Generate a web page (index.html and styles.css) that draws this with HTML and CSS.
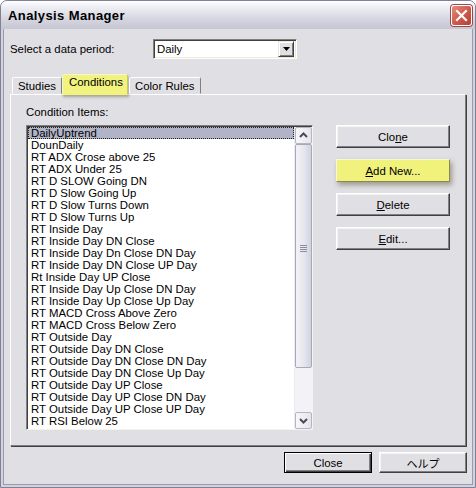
FILE: index.html
```html
<!DOCTYPE html>
<html>
<head>
<meta charset="utf-8">
<link rel="stylesheet" href="styles.css">
</head>
<body>
<div class="window">
  <div class="titlebar">
    <span class="title">Analysis Manager</span>
    <span class="close-x">
      <svg width="21" height="21" viewBox="0 0 21 21"><path d="M6 6 L15 15 M15 6 L6 15" stroke="#fff" stroke-width="2.2" stroke-linecap="square"/></svg>
    </span>
  </div>
  <div class="client">
    <div class="period-row">
      <span class="period-label">Select a data period:</span>
      <div class="combo">
        <span class="combo-text">Daily</span>
        <span class="combo-btn"><svg width="7" height="4" viewBox="0 0 7 4"><path d="M0 0 H7 L3.5 4 Z" fill="#000"/></svg></span>
      </div>
    </div>
    <div class="tabs">
      <span class="tab">Studies</span>
      <span class="tab tab-active">Conditions</span>
      <span class="tab">Color Rules</span>
    </div>
    <div class="panel">
      <div class="left">
        <div class="caption">Condition Items:</div>
        <div class="listbox">
          <ul class="items">
            <li class="selected">DailyUptrend</li>
            <li>DounDaily</li>
            <li>RT ADX Crose above 25</li>
            <li>RT ADX Under 25</li>
            <li>RT D SLOW Going DN</li>
            <li>RT D Slow Going Up</li>
            <li>RT D Slow Turns Down</li>
            <li>RT D Slow Turns Up</li>
            <li>RT Inside Day</li>
            <li>RT Inside Day DN Close</li>
            <li>RT Inside Day Dn Close DN Day</li>
            <li>RT Inside Day DN Close UP Day</li>
            <li>Rt Inside Day UP Close</li>
            <li>RT Inside Day Up Close DN Day</li>
            <li>RT Inside Day Up Close Up Day</li>
            <li>RT MACD Cross Above Zero</li>
            <li>RT MACD Cross Below Zero</li>
            <li>RT Outside Day</li>
            <li>RT Outside Day DN Close</li>
            <li>RT Outside Day DN Close DN Day</li>
            <li>RT Outside Day DN Close Up Day</li>
            <li>RT Outside Day UP Close</li>
            <li>RT Outside Day UP Close DN Day</li>
            <li>RT Outside Day UP Close UP Day</li>
            <li>RT RSI Below 25</li>
            <li>RT RSI Going DN</li>
          </ul>
          <div class="scrollbar">
            <span class="sb-btn"><svg width="15" height="15" viewBox="0 0 15 15"><path d="M4 9 L7.5 5.5 L11 9" fill="none" stroke="#4a4a58" stroke-width="2"/></svg></span>
            <span class="sb-thumb"><svg width="9" height="8" viewBox="0 0 9 8"><path d="M1 0.5 H8 M1 2.5 H8 M1 4.5 H8 M1 6.5 H8" stroke="#8c8ca0" stroke-width="1"/></svg></span>
            <span class="sb-track"></span>
            <span class="sb-btn"><svg width="15" height="15" viewBox="0 0 15 15"><path d="M4 6 L7.5 9.5 L11 6" fill="none" stroke="#4a4a58" stroke-width="2"/></svg></span>
          </div>
        </div>
      </div>
      <div class="actions">
        <span class="btn">Clo<u>n</u>e</span>
        <span class="btn btn-hl"><u>A</u>dd New...</span>
        <span class="btn"><u>D</u>elete</span>
        <span class="btn"><u>E</u>dit...</span>
      </div>
    </div>
    <div class="footer">
      <span class="btn btn-small btn-default">Close</span>
      <span class="btn btn-small jp">ヘルプ</span>
    </div>
  </div>
</div>
</body>
</html>
```
FILE: styles.css
```css
html, body {
  margin: 0;
  padding: 0;
  background: #ffffff;
}
body {
  font-family: "Liberation Sans", Arial, sans-serif;
  font-size: 11.4px;
  color: #000;
}
.window {
  width: 476px;
  height: 488px;
  box-sizing: border-box;
  border: 1px solid #808096;
  border-radius: 7px 7px 0 0;
  background: #d2d2de;
  display: flex;
  flex-direction: column;
  overflow: hidden;
}
.titlebar {
  height: 28px;
  flex: none;
  display: flex;
  align-items: center;
  justify-content: space-between;
  padding: 0 3px 0 7px;
  background: linear-gradient(#ffffff 0%, #ececf2 25%, #d8d8e2 60%, #c6c6d4 100%);
}
.title {
  font-weight: bold;
  font-size: 13px;
  letter-spacing: 0.4px;
  color: #000;
}
.close-x {
  width: 21px;
  height: 21px;
  box-sizing: border-box;
  border: 1px solid #ffffff;
  border-radius: 3px;
  background: linear-gradient(135deg, #e48c80 0%, #d25a4d 50%, #b8402f 100%);
  box-shadow: 0 0 0 1px #9a4a44;
  display: flex;
  align-items: center;
  justify-content: center;
  margin-top: 1px;
}
.close-x svg { margin: -1px; }
.client {
  flex: 1;
  margin: 0 2px 2px;
  border: 1px solid #9a9aae;
  border-top: none;
  background: #e0dfe3;
  display: flex;
  flex-direction: column;
  padding: 10px 0 0 6px;
}
.period-row {
  display: flex;
  align-items: center;
  height: 20px;
}
.period-label {
  width: 143px;
}
.combo {
  width: 144px;
  height: 20px;
  box-sizing: border-box;
  border: 1px solid;
  border-color: #808080 #ffffff #ffffff #808080;
  box-shadow: inset 1px 1px 0 #404040, inset -1px -1px 0 #ece9d8;
  background: #fff;
  display: flex;
  align-items: center;
  padding: 2px;
}
.combo-text {
  flex: 1;
  padding-left: 1px;
}
.combo-btn {
  width: 16px;
  height: 16px;
  box-sizing: border-box;
  background: #e0dfe3;
  border: 1px solid;
  border-color: #ece9d8 #404040 #404040 #ece9d8;
  box-shadow: inset 1px 1px 0 #fff, inset -1px -1px 0 #808080;
  display: flex;
  align-items: center;
  justify-content: center;
}
.tabs {
  display: flex;
  align-items: flex-end;
  margin-top: 15px;
  padding-left: 2px;
  height: 20px;
  position: relative;
  z-index: 2;
}
.tab {
  height: 17px;
  box-sizing: border-box;
  border: 1px solid;
  border-color: #ffffff #808080 transparent #ffffff;
  border-radius: 2px 2px 0 0;
  padding: 1px 5px 0 5px;
  line-height: 14px;
  background: #e0dfe3;
}
.tab:first-child { width: 50px; }
.tab-active {
  width: 66px;
  padding: 0 0 0 6px;
  line-height: 15px;
  background: #f1f37e;
  border-color: #f6f6d0 #c8c860 transparent #f6f6d0;
  box-shadow: 1px 2px 3px rgba(90, 90, 60, 0.45);
  margin-bottom: -1px;
  height: 21px;
}
.tab:last-child { width: 72px; margin-left: 1px; }
.panel {
  width: 456px;
  height: 352px;
  box-sizing: border-box;
  border: 1px solid;
  border-color: #ffffff #808080 #808080 #ffffff;
  box-shadow: 1px 1px 0 #404040;
  display: flex;
  padding: 0 0 0 15px;
}
.left {
  width: 287px;
}
.caption {
  margin-top: 10px;
  height: 14px;
  line-height: 14px;
}
.listbox {
  margin-top: 6px;
  width: 287px;
  height: 305px;
  box-sizing: border-box;
  border: 1px solid;
  border-color: #808080 #f4f4ec #f4f4ec #808080;
  box-shadow: inset 1px 1px 0 #404040;
  background: #fff;
  display: flex;
  overflow: hidden;
  padding: 1px 0 0 1px;
}
.items {
  list-style: none;
  margin: 0;
  padding: 0;
  flex: 1;
  overflow: hidden;
}
.items li {
  height: 12px;
  line-height: 12px;
  padding-left: 3px;
  white-space: nowrap;
}
.items li.selected {
  background: #b1b4c6;
  outline: 1px dotted #202020;
  outline-offset: -1px;
}
.scrollbar {
  width: 17px;
  display: flex;
  flex-direction: column;
  background: #f3f3f7;
  border-left: 1px solid #ebebf0;
}
.sb-btn {
  width: 17px;
  height: 17px;
  box-sizing: border-box;
  border: 1px solid #b4b4c4;
  border-radius: 2px;
  background: linear-gradient(90deg, #f8f8fb, #e4e4ec);
  display: flex;
  align-items: center;
  justify-content: center;
}
.sb-thumb {
  height: 224px;
  box-sizing: border-box;
  border: 1px solid #a8a8ba;
  border-radius: 2px;
  background: linear-gradient(90deg, #f2f2f6 0%, #e4e4ec 60%, #d2d2de 100%);
  display: flex;
  align-items: flex-start;
  justify-content: center;
  padding-top: 100px;
}
.sb-track {
  flex: 1;
}
.actions {
  display: flex;
  flex-direction: column;
  margin-left: 23px;
  padding-top: 30px;
  gap: 11px;
}
.btn {
  width: 114px;
  height: 23px;
  box-sizing: border-box;
  border: 1px solid;
  border-color: #ffffff #404040 #404040 #ffffff;
  box-shadow: inset -1px -1px 0 #808080, inset 1px 1px 0 #f4f4f0;
  background: #e0dfe3;
  display: flex;
  align-items: center;
  justify-content: center;
  text-align: center;
}
.btn-hl {
  background: #f0f27c;
  border-color: #f8f8d8 #8a8a50 #8a8a50 #f8f8d8;
  box-shadow: 2px 3px 5px rgba(70, 70, 40, 0.45);
}
.footer {
  display: flex;
  justify-content: flex-end;
  gap: 7px;
  padding-right: 5px;
  margin-top: 6px;
}
.btn-small {
  width: 88px;
  height: 21px;
}
.btn-default {
  border: 1px solid #000;
  box-shadow: inset 1px 1px 0 #ffffff, inset -1px -1px 0 #404040, inset -2px -2px 0 #808080;
}
.jp {
  font-family: "Noto Sans CJK JP", "Liberation Sans", sans-serif;
  font-size: 11px;
}
```
